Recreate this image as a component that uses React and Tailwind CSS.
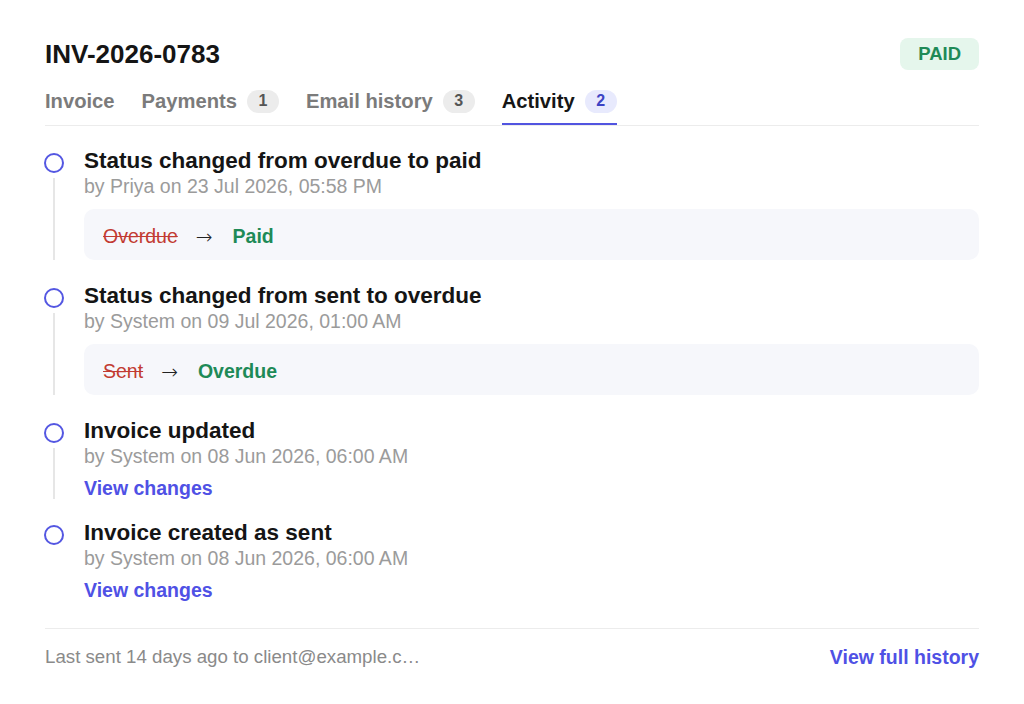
import React from "react";

function Tab({ label, count, active }) {
  return (
    <div
      className={
        "flex items-center gap-[10px] pb-[10px] border-b-2 " +
        (active ? "border-[#5154e0]" : "border-transparent")
      }
    >
      <span
        className={
          "text-[20.2px] leading-[24px] font-bold " +
          (active ? "text-[#161616]" : "text-[#7b7b7b]")
        }
      >
        {label}
      </span>
      {count !== undefined && (
        <span
          className={
            "h-[23px] min-w-[32px] px-[10px] rounded-full flex items-center justify-center text-[16px] font-bold " +
            (active ? "bg-[#e8eafd] text-[#3d43c4]" : "bg-[#ececec] text-[#555555]")
          }
        >
          {count}
        </span>
      )}
    </div>
  );
}

function Item({ title, sub, from, to, link, last, pb }) {
  return (
    <div className={pb}>
      <div className="flex">
        <div className="w-[20px] ml-[-1px] mr-[20px] flex flex-col items-center shrink-0">
          <div className="mt-[6px] w-[20px] h-[20px] rounded-full border-2 border-[#5457e2] shrink-0" />
          {!last && <div className="mt-[5px] w-[2px] flex-1 bg-[#e6e6e6]" />}
        </div>
        <div className="flex-1 min-w-0">
          <div className="text-[22.5px] leading-[27px] font-bold text-[#151515]">{title}</div>
          <div className="text-[19.5px] leading-[24px] text-[#9b9b9b]">{sub}</div>
          {from && (
            <div className="mt-[11px] h-[51px] pt-[4px] rounded-[10px] bg-[#f6f7fb] flex items-center px-[19px] text-[19.5px]">
              <span className="line-through text-[#c23b32]">{from}</span>
              <span
                className="ml-[18px] mr-[20px] text-[20px] font-light text-[#222222]"
                style={{ fontFamily: '"Noto Sans", "DejaVu Sans", sans-serif' }}
              >
                →
              </span>
              <span className="font-bold text-[#1e8a57]">{to}</span>
            </div>
          )}
          {link && (
            <div className="mt-[9px] text-[19.5px] leading-[22px] font-bold text-[#4f51e5]">
              View changes
            </div>
          )}
        </div>
      </div>
    </div>
  );
}

export default function App() {
  return (
    <div
      className="w-[1024px] h-[704px] bg-white px-[45px] pt-[38px]"
      style={{ fontFamily: '"Liberation Sans", Arial, sans-serif' }}
    >
      <div className="flex items-center justify-between">
        <h1 className="text-[26px] leading-[32px] font-bold text-[#151515]">INV-2026-0783</h1>
        <div className="h-[32px] px-[18px] rounded-[8px] bg-[#e5f6ec] flex items-center text-[18.5px] font-bold text-[#1f8a57]">
          PAID
        </div>
      </div>

      <div className="mt-[19px] flex gap-[27px] border-b border-[#ececec]">
        <Tab label="Invoice" />
        <Tab label="Payments" count={1} />
        <Tab label="Email history" count={3} />
        <Tab label="Activity" count={2} active />
      </div>

      <div className="pt-[21px]">
        <Item
          title="Status changed from overdue to paid"
          sub="by Priya on 23 Jul 2026, 05:58 PM"
          from="Overdue"
          to="Paid"
          pb="pb-[22px]"
        />
        <Item
          title="Status changed from sent to overdue"
          sub="by System on 09 Jul 2026, 01:00 AM"
          from="Sent"
          to="Overdue"
          pb="pb-[22px]"
        />
        <Item
          title="Invoice updated"
          sub="by System on 08 Jun 2026, 06:00 AM"
          link
          pb="pb-[20px]"
        />
        <Item
          title="Invoice created as sent"
          sub="by System on 08 Jun 2026, 06:00 AM"
          link
          last
          pb="pb-[27px]"
        />
      </div>

      <div className="border-t border-[#ececec] pt-[16px] flex items-center justify-between">
        <span className="text-[18.7px] leading-[24px] text-[#8a8a8a]">
          Last sent 14 days ago to client@example.c…
        </span>
        <span className="text-[19.5px] leading-[24px] font-bold text-[#4f51e5]">View full history</span>
      </div>
    </div>
  );
}
